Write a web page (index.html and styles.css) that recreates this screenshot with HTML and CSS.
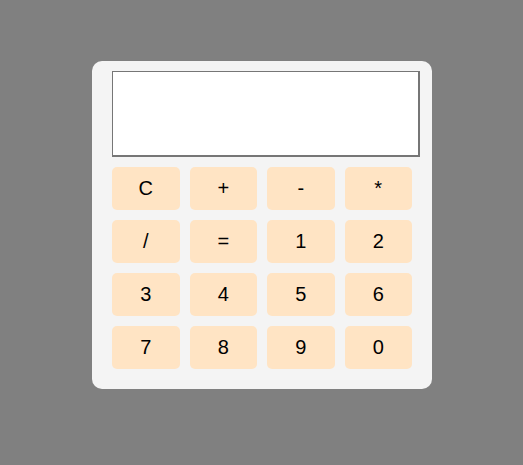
FILE: index.html
```html
<!DOCTYPE html>
<html>
<head>
<meta charset="utf-8">
<link rel="stylesheet" href="styles.css">
</head>
<body>
<div class="page">
  <div class="calculator">
    <div class="display"></div>
    <div class="keys">
      <button class="key">C</button>
      <button class="key">+</button>
      <button class="key">-</button>
      <button class="key">*</button>
      <button class="key">/</button>
      <button class="key">=</button>
      <button class="key">1</button>
      <button class="key">2</button>
      <button class="key">3</button>
      <button class="key">4</button>
      <button class="key">5</button>
      <button class="key">6</button>
      <button class="key">7</button>
      <button class="key">8</button>
      <button class="key">9</button>
      <button class="key">0</button>
    </div>
  </div>
</div>
</body>
</html>
```
FILE: styles.css
```css
html, body {
  margin: 0;
  padding: 0;
  background: #808080;
  height: 100%;
}
.page {
  display: flex;
  justify-content: center;
  padding-top: 61px;
  padding-left: 1px;
}
.calculator {
  width: 300px;
  padding: 10px 20px 20px 20px;
  background: #f4f4f4;
  border-radius: 10px;
  display: flex;
  flex-direction: column;
  gap: 10px;
}
.display {
  width: 305px;
  height: 83px;
  background: #fff;
  border-style: solid;
  border-color: #767676;
  border-width: 1px 2px 2px 1px;
}
.keys {
  display: grid;
  grid-template-columns: repeat(4, 1fr);
  grid-auto-rows: 43px;
  gap: 10px;
}
.key {
  border: none;
  margin: 0;
  padding: 0;
  background: #ffe4c4;
  border-radius: 5px;
  font-family: "Liberation Sans", Arial, sans-serif;
  font-size: 20px;
  color: #000;
}
```
